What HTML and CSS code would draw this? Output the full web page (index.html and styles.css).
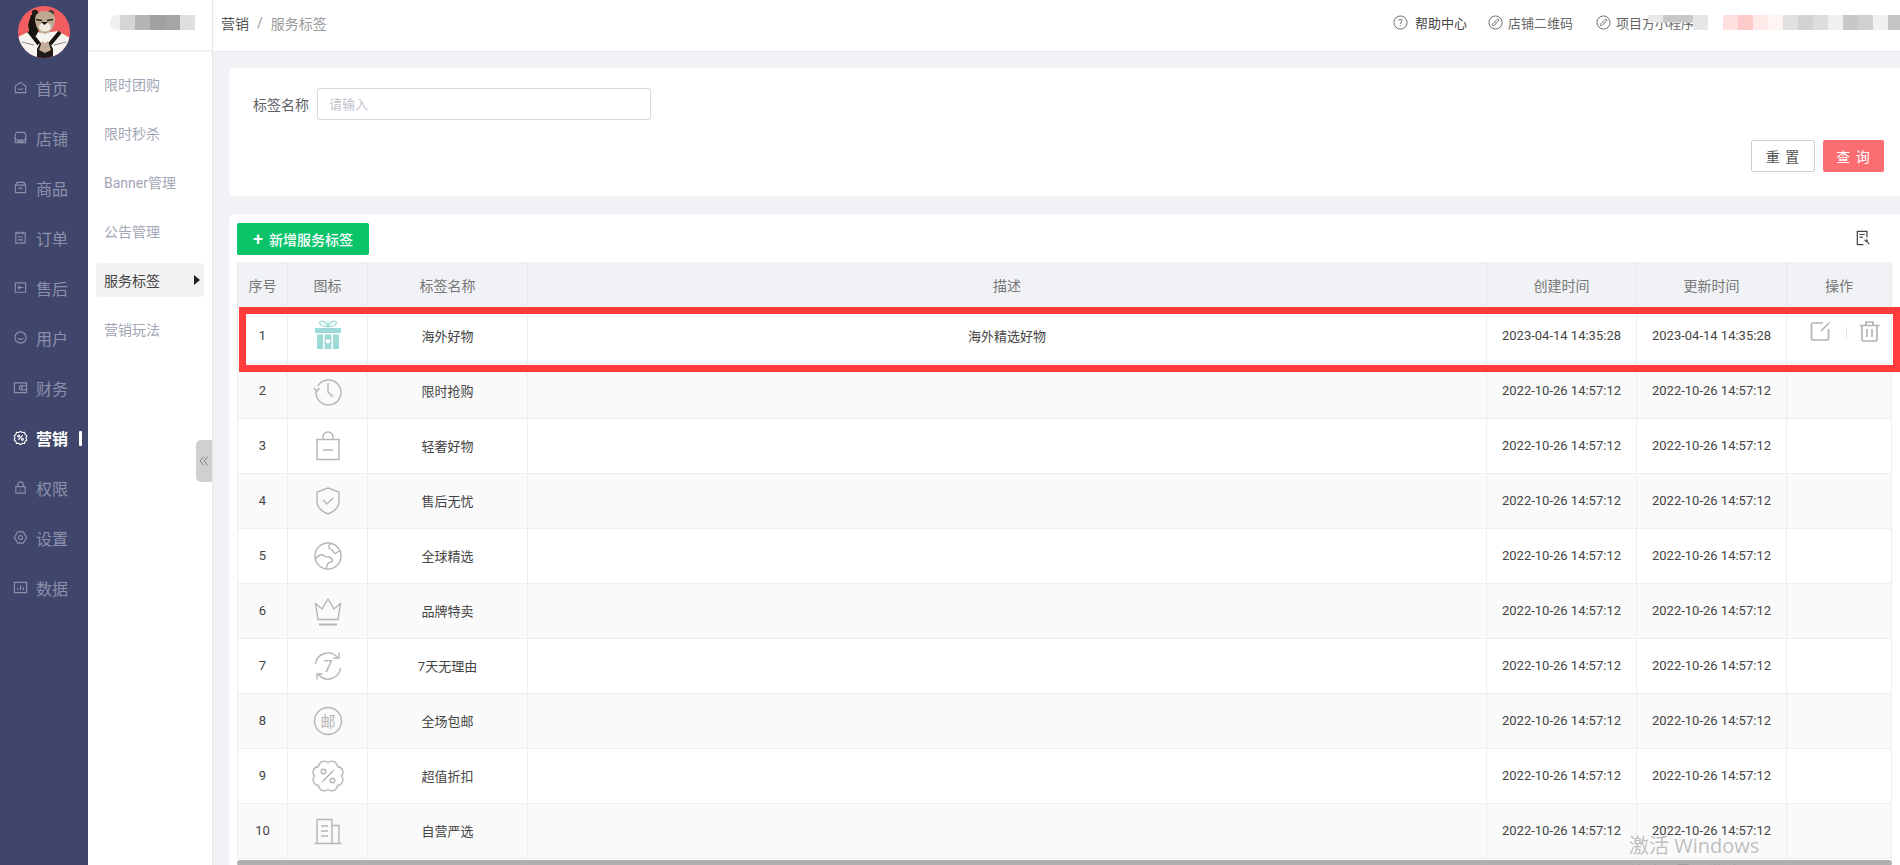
FILE: index.html
```html
<!DOCTYPE html>
<html lang="zh-CN">
<head>
<meta charset="utf-8">
<title>服务标签</title>
<link rel="stylesheet" href="styles.css">
</head>
<body>
<svg class="defs" width="0" height="0" aria-hidden="true">
  <defs>
    <symbol id="i-link" viewBox="0 0 16 16"><circle cx="8" cy="8" r="7" fill="none" stroke="currentColor" stroke-width="1"/><path d="M6.300 8.200 4.900 9.600a1.100 1.100 0 0 0 1.600 1.600l2-2a1.100 1.100 0 0 0 0-1.600M9.700 7.800l1.400-1.400a1.100 1.100 0 0 0-1.600-1.600l-2 2a1.100 1.100 0 0 0 0 1.600" fill="none" stroke="currentColor" stroke-width="1"/></symbol>
  </defs>
</svg>
<div class="app">
  <aside class="rail">
    <div class="logo">
      <svg viewBox="0 0 52 52" width="52" height="52">
        <defs><clipPath id="logo-clip"><circle cx="26" cy="26" r="26"/></clipPath></defs>
        <g clip-path="url(#logo-clip)">
          <rect width="52" height="52" fill="#f25e60"/>
          <path d="M0 52V31l12-6 14 2 14-2 12 7v18z" fill="#f6f4ef"/>
          <path d="M13 9l-3 10 2 8 6 3 4-8-3-13z" fill="#17130f"/>
          <circle cx="17" cy="7" r="3.200" fill="#221c17"/><circle cx="33" cy="7" r="3" fill="#4a3d33"/>
          <path d="M17 13c0-5 5-8 10-8s10 3 10 8c0 6-3 11-5 13l-5 2-5-2c-3-3-5-8-5-13z" fill="#bda892"/>
          <ellipse cx="27" cy="21" rx="6" ry="4.500" fill="#efe9df"/>
          <path d="M23 16h7l-3.500 3z" fill="#1a1512"/>
          <path d="M18 13.500l6 1M29 14.500l6-1" stroke="#2a211b" stroke-width="1.300"/>
          <path d="M11 25l10 13M42 26 32 38" stroke="#17130f" stroke-width="4"/>
          <path d="M19 52V43l3-6h10l3 6v9z" fill="#1f1a17"/>
          <path d="M21 44l3-9 3 2 3-2 3 9-6 3z" fill="#c4ae97"/>
          <path d="M4 36l12 3M48 36l-12 3" stroke="#8f8a84" stroke-width="1"/>
        </g>
      </svg>
    </div>
    <nav class="rail-nav">
      <a class="rail-item"><svg class="rail-icon" viewBox="0 0 16 16"><path d="M2.500 6.500 8 2.500l5.500 4v7h-11z"/><path d="M5.500 9c.8 1.500 4.200 1.500 5 0"/></svg>首页</a>
      <a class="rail-item"><svg class="rail-icon" viewBox="0 0 16 16"><path d="M3.500 2.500h9l1.500 4a2 2 0 0 1-12 0z"/><path d="M2.500 7.500v6h11v-6M6 13.500v-3h4v3"/></svg>店铺</a>
      <a class="rail-item"><svg class="rail-icon" viewBox="0 0 16 16"><path d="M4.500 2.500h7l2 3v8h-11v-8z"/><path d="M2.500 5.500h11M6 8c.5 1.500 3.500 1.500 4 0"/></svg>商品</a>
      <a class="rail-item"><svg class="rail-icon" viewBox="0 0 16 16"><path d="M3 3h10v11H3zM5.500 1.500v3M10.500 1.500v3M5.500 7.500h5M5.500 10.500h5"/></svg>订单</a>
      <a class="rail-item"><svg class="rail-icon" viewBox="0 0 16 16"><path d="M2.500 3h11v10h-11zM11 8H6M7.500 6 5.500 8l2 2"/></svg>售后</a>
      <a class="rail-item"><svg class="rail-icon" viewBox="0 0 16 16"><circle cx="8" cy="8" r="6"/><path d="M5.300 8.500c.8 2 4.600 2 5.400 0"/></svg>用户</a>
      <a class="rail-item"><svg class="rail-icon" viewBox="0 0 16 16"><path d="M1.500 3h13v10.500h-13zM14.500 6H9a2.200 2.200 0 0 0 0 4.500h5.500"/><circle cx="9.500" cy="8.200" r=".6"/></svg>财务</a>
      <a class="rail-item is-active"><svg class="rail-icon" viewBox="0 0 16 16"><path d="M8 1.500l2 1.200 2.300-.1.700 2.200 1.700 1.500-.8 2.200.8 2.200-1.700 1.500-.7 2.200-2.300-.1-2 1.200-2-1.200-2.300.1-.7-2.200-1.700-1.500.8-2.200-.8-2.200L3 4.800l.7-2.200 2.300.1z"/><path d="M5.700 10.400l4.600-4.800"/><circle cx="6" cy="6.300" r="1"/><circle cx="10" cy="9.800" r="1"/></svg>营销</a>
      <a class="rail-item"><svg class="rail-icon" viewBox="0 0 16 16"><path d="M3 7h10v7H3zM5 7V5a3 3 0 0 1 6 0v2M8 10v1.500"/></svg>权限</a>
      <a class="rail-item"><svg class="rail-icon" viewBox="0 0 16 16"><path d="M5 2h6l3.500 6-3.500 6H5L1.500 8z"/><circle cx="8" cy="8" r="2.200"/></svg>设置</a>
      <a class="rail-item"><svg class="rail-icon" viewBox="0 0 16 16"><path d="M1.500 2.500h13v11h-13zM5 11V8.500M8 11V5.500M11 11V7.500"/></svg>数据</a>
    </nav>
  </aside>

  <aside class="sub">
    <div class="sub-head"><span class="blur-shop"></span></div>
    <ul class="sub-list">
      <li class="sub-item">限时团购</li>
      <li class="sub-item">限时秒杀</li>
      <li class="sub-item">Banner管理</li>
      <li class="sub-item">公告管理</li>
      <li class="sub-item is-active">服务标签<span class="caret"></span></li>
      <li class="sub-item">营销玩法</li>
    </ul>
    <div class="collapse"><svg viewBox="0 0 12 12" width="12" height="12"><path d="M6 1.500 2 6l4 4.500M10 1.500 6 6l4 4.500" fill="none" stroke="#7d7d7d" stroke-width=".9"/></svg></div>
  </aside>

  <main class="main">
    <header class="top">
      <div class="crumb"><span class="crumb-root">营销</span><span class="crumb-sep">/</span><span class="crumb-leaf">服务标签</span></div>
      <div class="top-links">
        <a class="top-link top-help"><svg viewBox="0 0 16 16" width="15" height="15"><circle cx="8" cy="8" r="7" fill="none" stroke="currentColor"/><text x="8" y="11.500" text-anchor="middle" font-size="10" fill="currentColor">?</text></svg>帮助中心</a>
        <a class="top-link top-shop"><svg width="15" height="15"><use href="#i-link"/></svg>店铺二维码</a>
        <a class="top-link top-last"><svg width="15" height="15"><use href="#i-link"/></svg>项目方小程序码</a>
      </div>
      <span class="blur-user"></span>
    </header>

    <div class="content">
      <section class="card search">
        <div class="field">
          <label class="field-label">标签名称</label>
          <input class="field-input" type="text" placeholder="请输入">
        </div>
        <div class="search-actions">
          <button class="btn btn-reset">重 置</button>
          <button class="btn btn-query">查 询</button>
        </div>
      </section>

      <section class="card list">
        <div class="toolbar">
          <button class="btn-add"><span class="plus">+</span>新增服务标签</button>
          <svg class="tool-icon" viewBox="0 0 16 18" width="14" height="16"><path d="M12.500 8V1.500h-11v15h7" fill="none" stroke="#444" stroke-width="1.400"/><path d="M4 5h6M4 8h4" stroke="#444" stroke-width="1.200"/><path d="M9.500 10.500a2.500 2.500 0 0 0 3 3l2 3 1-1-2.200-2.600a2.500 2.500 0 0 0-2.300-3.400l1.300 1.500-1 1z" fill="#333"/></svg>
        </div>
        <div class="table-wrap">
          <table class="grid">
            <colgroup><col class="c-no"><col class="c-icon"><col class="c-name"><col><col class="c-time"><col class="c-time"><col class="c-op"></colgroup>
            <thead>
              <tr><th>序号</th><th>图标</th><th>标签名称</th><th>描述</th><th>创建时间</th><th>更新时间</th><th>操作</th></tr>
            </thead>
            <tbody>
              <tr>
                <td>1</td>
                <td><svg class="tag-icon gift" viewBox="0 0 32 32"><path d="M16 8c-2-5-6-7-8-5s4 5 8 5zM16 8c2-5 6-7 8-5s-4 5-8 5zM16 2v6" fill="none" stroke="#9dd9d6" stroke-width="1.200"/><path d="M3 9h26v5H3zM5 15.500h6V30H5zM12.500 15.500h7V30h-7zM21 15.500h6V30h-6z" fill="#9dd9d6"/><path d="M16 25l-2.400-2.500a1.500 1.500 0 0 1 2.400-1.700 1.500 1.500 0 0 1 2.400 1.700z" fill="#fff"/></svg></td>
                <td>海外好物</td><td>海外精选好物</td><td>2023-04-14 14:35:28</td><td>2023-04-14 14:35:28</td>
                <td class="ops">
                  <svg class="op-icon" viewBox="0 0 21 21" width="21" height="21"><path d="M13 2H3a1.500 1.500 0 0 0-1.500 1.500v14A1.500 1.500 0 0 0 3 19h14a1.500 1.500 0 0 0 1.500-1.500V8M19.500 1.500 11 10"/></svg>
                  <span class="op-sep"></span>
                  <svg class="op-icon" viewBox="0 0 21 21" width="21" height="21"><path d="M0.500 4.500h20M7 4.500V1h7v3.500M3 4.500V18a2 2 0 0 0 2 2h11a2 2 0 0 0 2-2V4.500M8 8v8M13 8v8"/></svg>
                </td>
              </tr>
              <tr>
                <td>2</td>
                <td><svg class="tag-icon" viewBox="0 0 32 32"><path d="M5.800 11a12.500 12.500 0 1 1-1.800 6"/><path d="M2 13l2.500 3.500L7.500 13M16 8v9l5 5"/></svg></td>
                <td>限时抢购</td><td></td><td>2022-10-26 14:57:12</td><td>2022-10-26 14:57:12</td><td></td>
              </tr>
              <tr>
                <td>3</td>
                <td><svg class="tag-icon" viewBox="0 0 32 32"><path d="M5 9.500h22v20H5zM11 9.500V7a5 5 0 0 1 10 0v2.500M11 20h10"/></svg></td>
                <td>轻奢好物</td><td></td><td>2022-10-26 14:57:12</td><td>2022-10-26 14:57:12</td><td></td>
              </tr>
              <tr>
                <td>4</td>
                <td><svg class="tag-icon" viewBox="0 0 32 32"><path d="M16 3l11 4v9c0 7-6 11-11 13-5-2-11-6-11-13V7z"/><path d="M11 15l4 4 6-6"/></svg></td>
                <td>售后无忧</td><td></td><td>2022-10-26 14:57:12</td><td>2022-10-26 14:57:12</td><td></td>
              </tr>
              <tr>
                <td>5</td>
                <td><svg class="tag-icon" viewBox="0 0 32 32"><circle cx="16" cy="16" r="13"/><path d="M3.500 19c2-3 6-6 9-3 2 2 3 0 5 1s3 3 3 4-4 1-5 3-1 3-1 4.800M19 3.400c-3 2-3 5 0 6s2 4 4 4 3-3 5.500-2"/></svg></td>
                <td>全球精选</td><td></td><td>2022-10-26 14:57:12</td><td>2022-10-26 14:57:12</td><td></td>
              </tr>
              <tr>
                <td>6</td>
                <td><svg class="tag-icon" viewBox="0 0 32 32"><path d="M3.500 8.500 10 14l6-10 6 10 6.500-5.500-2.500 16H6z"/><path class="thick" d="M7 29.500h18"/></svg></td>
                <td>品牌特卖</td><td></td><td>2022-10-26 14:57:12</td><td>2022-10-26 14:57:12</td><td></td>
              </tr>
              <tr>
                <td>7</td>
                <td><svg class="tag-icon" viewBox="0 0 32 32"><path d="M3.500 14a12.500 12.500 0 0 1 22-6.500M28.500 18a12.500 12.500 0 0 1-22 6.500"/><path d="M27 2.500v5.500h-5.500M5 29.500V24h5.500"/><text class="glyph" x="16" y="22" text-anchor="middle" font-size="17">7</text></svg></td>
                <td>7天无理由</td><td></td><td>2022-10-26 14:57:12</td><td>2022-10-26 14:57:12</td><td></td>
              </tr>
              <tr>
                <td>8</td>
                <td><svg class="tag-icon" viewBox="0 0 32 32"><circle cx="16" cy="16" r="13.500"/><text class="glyph" x="16" y="21.500" text-anchor="middle" font-size="15">邮</text></svg></td>
                <td>全场包邮</td><td></td><td>2022-10-26 14:57:12</td><td>2022-10-26 14:57:12</td><td></td>
              </tr>
              <tr>
                <td>9</td>
                <td><svg class="tag-icon" viewBox="0 0 32 32"><path d="M16 2.500A5.800 5.800 0 0 1 25.500 6.500 5.800 5.800 0 0 1 29.500 16 5.800 5.800 0 0 1 25.500 25.500 5.800 5.800 0 0 1 16 29.500 5.800 5.800 0 0 1 6.500 25.500 5.800 5.800 0 0 1 2.500 16 5.800 5.800 0 0 1 6.500 6.500 5.800 5.800 0 0 1 16 2.500z"/><path d="M10.500 21.500l11-11"/><circle cx="11.500" cy="11.500" r="2.300"/><circle cx="20.500" cy="20.500" r="2.300"/></svg></td>
                <td>超值折扣</td><td></td><td>2022-10-26 14:57:12</td><td>2022-10-26 14:57:12</td><td></td>
              </tr>
              <tr>
                <td>10</td>
                <td><svg class="tag-icon" viewBox="0 0 32 32"><path d="M2.500 28.500h27M5 28.500V4.500h15v24M20 10.500h7v18M9 11h7M9 16h7M9 21h7"/></svg></td>
                <td>自营严选</td><td></td><td>2022-10-26 14:57:12</td><td>2022-10-26 14:57:12</td><td></td>
              </tr>
            </tbody>
          </table>
          <div class="scrollbar"></div>
          <div class="mark-box"></div>
        </div>
      </section>
    </div>
  </main>
</div>
<div class="watermark"><div class="wm-title">激活 Windows</div><div class="wm-sub">转到“设置”以激活 Windows。</div></div>
</body>
</html>
```
FILE: styles.css
```css
* { box-sizing: border-box; }
html, body { margin: 0; height: 100%; overflow: hidden; }
body { font-family: Roboto, "Noto Sans CJK SC", sans-serif; font-size: 13px; color: #333; background: #f0f2f6; }
.defs { position: absolute; }
.app { display: flex; height: 865px; }

/* left rail */
.rail { width: 88px; flex: none; background: #40466b; }
.logo { display: flex; justify-content: center; padding-top: 6px; height: 62.5px; }
.rail-nav { display: flex; flex-direction: column; }
.rail-item { position: relative; display: flex; align-items: center; gap: 8px; height: 50px; padding-left: 13px; font-size: 16px; color: #8b91ab; }
.rail-icon { width: 15px; height: 15px; flex: none; fill: none; stroke: currentColor; stroke-width: 1.2; }
.rail-item.is-active { color: #fff; font-weight: 700; }
.rail-item.is-active::after { content: ""; position: absolute; left: 79px; top: 18px; width: 3px; height: 15px; background: #fff; border-radius: 1px; }

/* secondary menu */
.sub { position: relative; width: 125px; flex: none; background: #fff; border-right: 1px solid #e4e6ea; }
.sub-head { height: 52px; padding: 15px 22px; border-bottom: 2px solid #f3f3f3; }
.blur-shop { display: block; width: 85px; height: 15px; border-radius: 7px 0 0 7px; background: linear-gradient(90deg, #f0f0f0 0 10px, #d5d5d5 10px 25px, #b5b5b5 25px 40px, #a0a0a0 40px 55px, #a5a5a5 55px 70px, #dfdfdf 70px 85px); }
.sub-list { list-style: none; margin: 0; padding: 14.5px 8px 0; }
.sub-item { position: relative; display: flex; align-items: center; height: 34px; margin-bottom: 15px; padding-left: 8px; font-size: 14px; color: #a2a6b4; border-radius: 4px; }
.sub-item.is-active { background: #f2f2f3; color: #444; }
.caret { position: absolute; right: 4px; top: 12px; border-left: 6px solid #222; border-top: 5px solid transparent; border-bottom: 5px solid transparent; }
.collapse { position: absolute; right: 0; top: 440px; display: flex; align-items: center; justify-content: center; width: 16px; height: 42px; background: #d0d0d0; border-radius: 5px 0 0 5px; }

/* main */
.main { flex: 1; min-width: 0; display: flex; flex-direction: column; }
.top { position: relative; display: flex; align-items: center; justify-content: space-between; height: 52px; flex: none; padding: 0 0 6px 8px; background: #fff; border-bottom: 1px solid #e8e9ec; }
.crumb { display: flex; align-items: center; gap: 8px; font-size: 14px; }
.crumb-root { color: #555; }
.crumb-sep, .crumb-leaf { color: #999; }
.top-links { display: flex; align-items: center; padding-right: 193px; font-size: 13px; color: #666; }
.top-link { display: flex; align-items: center; gap: 5px; }
.top-help { gap: 7px; color: #444; }
.top-help svg { color: #666; }
.top-shop { margin: 0 23px 0 21px; }
.blur-user { position: absolute; left: 1435px; top: 15px; width: 252px; height: 15px; background: linear-gradient(90deg, #e8e8e8 0 15px, #c8c8c8 15px 45px, #e6e6e6 45px 60px, #fff 60px 75px, #ffe0e0 75px 90px, #fdc9c9 90px 105px, #ffe8e8 105px 120px, #fff5f3 120px 135px, #e0e0e0 135px 150px, #d2d2d2 150px 165px, #ddd 165px 180px, #f0f0f0 180px 195px, #c8c8c8 195px 210px, #d0d0d0 210px 225px, #f0f0f0 225px 240px, #c5c5c5 240px 252px); clip-path: polygon(0 0, 100% 0, 100% 100%, 18% 100%, 18% 50%, 0 50%); }

.content { flex: 1; min-height: 0; padding: 16px 0 0 16px; }
.card { background: #fff; border-radius: 5px; }
.search { display: flex; flex-direction: column; justify-content: space-between; height: 128px; margin-bottom: 18px; padding: 20px 16px 24px 24px; border-radius: 5px 0 0 5px; }
.field { display: flex; align-items: center; gap: 8px; }
.field-label { color: #606266; font-size: 14px; }
.field-input { width: 334px; height: 32px; padding: 0 11px; border: 1px solid #d8dae0; border-radius: 2px; font: inherit; outline: none; }
.field-input::placeholder { color: #c0c4cc; }
.search-actions { display: flex; justify-content: flex-end; gap: 8px; }
.btn { height: 32px; border-radius: 2px; font: 14px Roboto, "Noto Sans CJK SC", sans-serif; letter-spacing: 1px; }
.btn-reset { width: 64px; background: #fff; border: 1px solid #ccc; color: #555; }
.btn-query { width: 61px; background: #fb6d71; border: 0; color: #fff; }

.list { height: 660px; padding: 9px 8px 0; border-radius: 5px 0 0 0; }
.toolbar { display: flex; align-items: flex-start; justify-content: space-between; height: 39px; }
.btn-add { display: flex; align-items: center; justify-content: center; gap: 6px; width: 132px; height: 32px; background: #0bc46a; border: 0; border-radius: 2px; color: #fff; font: 500 14px Roboto, "Noto Sans CJK SC", sans-serif; }
.plus { font-size: 18px; line-height: 1; }
.tool-icon { margin: 7px 22px 0 0; }

.table-wrap { position: relative; }
.grid { width: 1655px; border-collapse: collapse; table-layout: fixed; }
.c-no { width: 50px; } .c-icon { width: 80px; } .c-name { width: 160px; } .c-time { width: 150px; } .c-op { width: 105px; }
.grid th { height: 46px; background: #f0f2f5; color: #777; font-size: 14px; font-weight: 400; border-right: 1px solid #e6e7ea; border-left: 1px solid #e6e7ea; padding: 0; }
.grid td { height: 55px; padding: 0; text-align: center; border: 1px solid #eeeeef; border-top: 0; background: #fff; color: #444; }
.grid tbody tr:nth-child(even) td { background: #fafafa; }
.tag-icon { display: block; width: 32px; height: 32px; margin: auto; fill: none; stroke: #b5b5b5; stroke-width: 1.4; }
.tag-icon .thick { stroke-width: 2; }
.tag-icon.gift { stroke: none; }
.glyph { fill: #b5b5b5; stroke: none; font-family: Roboto, "Noto Sans CJK SC", sans-serif; }
.ops { position: relative; }
.op-icon { position: absolute; top: 13px; fill: none; stroke: #b4b4b4; stroke-width: 1.7; }
.op-icon:first-child { left: 23px; }
.op-icon:last-child { left: 72px; }
.op-sep { position: absolute; left: 59px; top: 19px; width: 1px; height: 11px; background: #e6e6e6; }
.scrollbar { height: 6px; width: 1655px; margin-top: 1px; background: #b0b0b0; border-radius: 3px; }
.mark-box { position: absolute; left: 2px; top: 45px; right: -8px; height: 65px; border: 7px solid #ff3b3b; pointer-events: none; }

.watermark { position: absolute; left: 1629px; top: 831px; color: rgba(130,130,130,.5); font-family: "Open Sans", "Noto Sans CJK SC", sans-serif; pointer-events: none; }
.wm-title { font-size: 20px; line-height: 30px; }
.wm-sub { font-size: 14px; line-height: 20px; }
```
